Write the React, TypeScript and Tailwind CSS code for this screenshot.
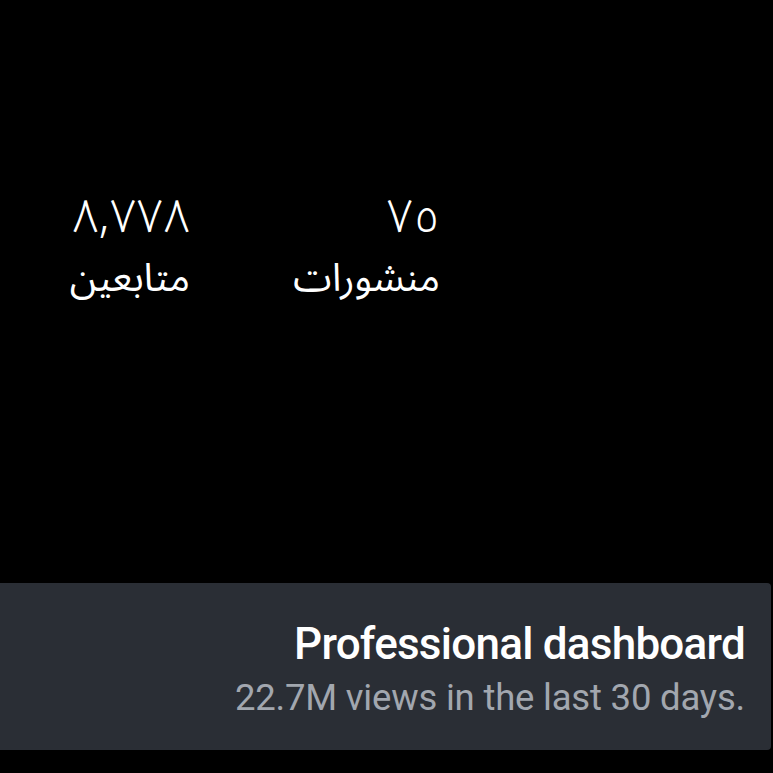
export default function App() {
  return (
    <div className="w-[773px] h-[773px] bg-black overflow-hidden flex flex-col">
      <div dir="rtl" className="h-[583px] pt-[197px] pr-[333px] flex flex-row text-white" style={{ fontFamily: '"Noto Sans Arabic", "DejaVu Sans", sans-serif' }}>
        <div className="w-[250px] flex flex-col items-start">
          <div className="text-[47px] leading-[40px] font-light">٧٥</div>
          <div className="text-[39px] leading-[44px] mt-[20px]">منشورات</div>
        </div>
        <div className="flex flex-col items-start">
          <div className="text-[47px] leading-[40px] tracking-[3px] font-light">٨,٧٧٨</div>
          <div className="text-[39px] leading-[44px] mt-[20px]">متابعين</div>
        </div>
      </div>
      <div className="h-[167px] w-[771px] bg-[#2a2e35] rounded-r-[4px] flex flex-col items-end justify-center pr-[26px] pt-[6px]" style={{ fontFamily: 'Roboto, sans-serif' }}>
        <div className="text-white text-[44px] font-medium leading-[50px] tracking-[-0.75px]">Professional dashboard</div>
        <div className="text-[#a2a7af] text-[36.5px] leading-[46px] tracking-[-0.2px] mt-[6px]">22.7M views in the last 30 days.</div>
      </div>
    </div>
  );
}
